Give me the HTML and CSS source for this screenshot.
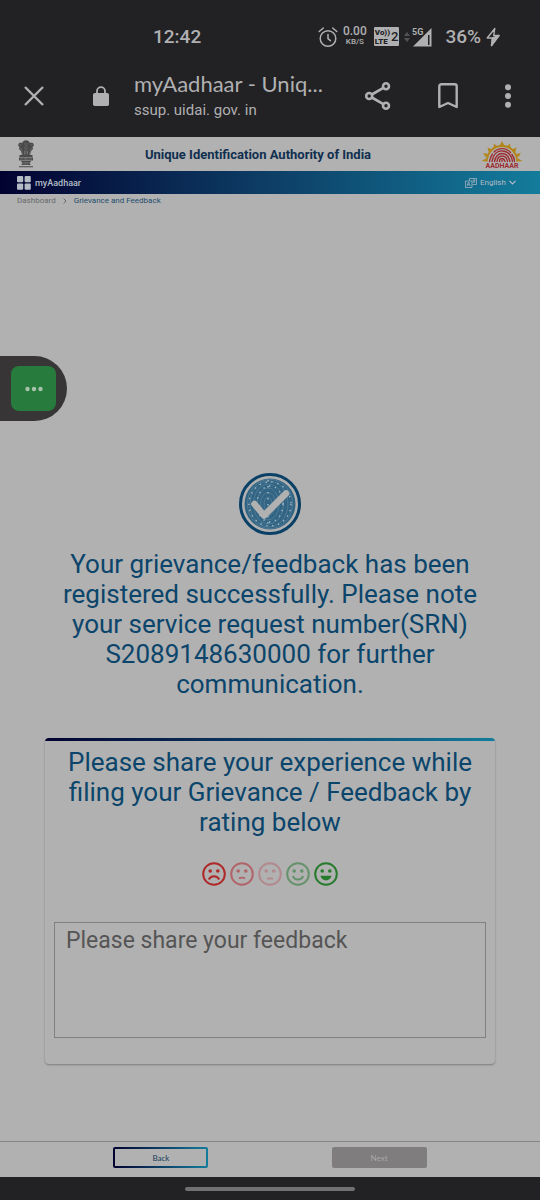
FILE: index.html
```html
<!DOCTYPE html>
<html lang="en">
<head>
  <meta charset="UTF-8">
  <meta name="viewport" content="width=device-width, initial-scale=1.0">
  <title>myAadhaar - Unique Identification Authority of India</title>
  <link rel="stylesheet" href="styles.css">
</head>
<body>
  <!-- Phone status bar -->
  <div class="status-bar">
    <span class="clock">12:42</span>
    <div class="status-icons">
      <svg class="icon-alarm" viewBox="0 0 20 22" fill="none" stroke="currentColor" stroke-width="1.5" stroke-linecap="round">
        <circle cx="10" cy="12.5" r="7.8"/>
        <path d="M10 8.5v4.2l2.4 2M1.2 5.5L5.3 2M18.8 5.5L14.7 2"/>
      </svg>
      <span class="net-speed"><b>0.00</b><small>KB/S</small></span>
      <span class="volte"><span class="volte-label"><span>Vo))</span><span>LTE</span></span><span class="volte-sim">2</span></span>
      <svg class="icon-signal" viewBox="0 0 28 20" fill="currentColor">
        <path d="M0 9l3-4 3 4zM0 11h6l-3 4z" opacity=".35"/>
        <path d="M9 19.5L27.5 1v18.5zM24 8v10h1.5V8z" fill-rule="evenodd"/>
        <text x="8" y="8" class="signal-text">5G</text>
      </svg>
      <span class="battery">36%</span>
      <svg class="icon-bolt" viewBox="0 0 14 20" fill="none" stroke="currentColor" stroke-width="1.4" stroke-linejoin="round">
        <path d="M8.8 1.5L1.2 11h5.2L5.5 18.5 13 8.5H7.7z"/>
        <path d="M6.4 11L13 8.5 5.5 18.5z" fill="currentColor"/>
      </svg>
    </div>
  </div>

  <!-- Browser bar -->
  <div class="browser-bar">
    <button class="icon-btn close-btn" aria-label="Close">
      <svg width="20" height="20" viewBox="0 0 20 20" fill="none" stroke="currentColor" stroke-width="2.4"><path d="M1 1l18 18M19 1L1 19"/></svg>
    </button>
    <svg class="icon-lock" viewBox="0 0 16 20">
      <path d="M4 9V5.2a4 4 0 0 1 8 0V9" fill="none" stroke="currentColor" stroke-width="1.8"/>
      <rect x="0" y="7" width="16" height="13" rx="1.8" fill="currentColor"/>
    </svg>
    <div class="page-info">
      <div class="page-title">myAadhaar - Uniq...</div>
      <div class="page-url">ssup. uidai. gov. in</div>
    </div>
    <div class="browser-actions">
      <button class="icon-btn" aria-label="Share">
        <svg width="26" height="28" viewBox="0 0 26 28" fill="none" stroke="currentColor" stroke-width="2.6">
          <circle cx="21" cy="4.3" r="3"/><circle cx="4.2" cy="14" r="3"/><circle cx="21" cy="23.7" r="3"/>
          <path d="M6.8 12.5l11.6-6.7M6.8 15.5l11.6 6.7"/>
        </svg>
      </button>
      <button class="icon-btn" aria-label="Bookmark">
        <svg width="20" height="26" viewBox="0 0 20 26" fill="none" stroke="currentColor" stroke-width="2.4" stroke-linejoin="round"><path d="M1.3 3.2a2 2 0 0 1 2-2h13.4a2 2 0 0 1 2 2V24L10 20l-8.7 4z"/></svg>
      </button>
      <button class="icon-btn" aria-label="More options">
        <svg width="6" height="24" viewBox="0 0 6 24" fill="currentColor"><circle cx="3" cy="3.2" r="3"/><circle cx="3" cy="12" r="3"/><circle cx="3" cy="20.8" r="3"/></svg>
      </button>
    </div>
  </div>

  <!-- Site header -->
  <header class="header">
    <svg class="emblem" viewBox="0 0 34 56">
      <g fill="#4a4a4a">
        <path d="M11 3q6-5 12 0l2 5-1 7-3 4h-8l-3-4-1-7z"/>
        <path d="M10 5L3 6 1 11l3 3-1 4 4 4 2 8h5l-1-14zM24 5l7 1 2 5-3 3 1 4-4 4-2 8h-5l1-14z"/>
        <path d="M12 18h10l1 12H11zM4 30h26v4H4zM3 35h28v6H3zM7 42h20l-3 5 3 3H7l3-3z"/>
        <path d="M3 52.5h28v2H3z"/>
      </g>
      <g fill="none" stroke="#868686" stroke-width="1.1">
        <path d="M13 8h3M18 8h3M15 12h4M4 10h4M26 10h4M13 15l4 3 4-3M6 16l3 5M28 16l-3 5M14 21v8M17 20v9M20 21v8M9 23l1 6M25 23l-1 6"/>
        <circle cx="17" cy="38" r="2.4"/>
        <path d="M5 38h7M22 38h7M11 45h12M12 48h10"/>
      </g>
    </svg>
    <h1>Unique Identification Authority of India</h1>
    <svg class="aadhaar-logo" viewBox="0 0 84 54">
      <g fill="#b28519">
        <path d="M1 40l9-5 2 6zM4 24l10 2-4 7zM13 13l9 4-6 7zM26 5l7 7-8 4zM42 0l5 10H37zM58 5l1 11-8-4zM71 13l-3 11-6-7zM80 24l-6 9-4-7zM83 40l-11 1 2-6z"/>
        <path d="M10 41C11 20 24 8 42 8s31 12 32 33h-3C69 23 58 12 42 12S15 23 13 41z"/>
      </g>
      <g fill="none" stroke="#9c2a2e" stroke-width="2.7" stroke-linecap="round">
        <path d="M17 41c1-6 3-11 6-15M26 22c9-9 25-9 33 1M62 27c3 4 5 9 5 14M22 41c3-16 12-22 21-21 12 1 18 9 20 21M27 41c2-9 7-16 15-16 9 0 14 7 16 16M32 41c1-7 4-11 10-11s10 5 11 11M37 41c0-4 2-6 5-6s5 3 6 6M42 39v2"/>
      </g>
      <text x="42" y="53" class="logo-text">AADHAAR</text>
    </svg>
  </header>

  <nav class="navbar">
    <a href="#" class="brand">
      <svg width="14" height="14" viewBox="0 0 14 14" fill="currentColor"><rect width="6.2" height="6.2" rx="1"/><rect x="7.6" width="6.2" height="6.2" rx="1"/><rect y="7.6" width="6.2" height="6.2" rx="1"/><rect x="7.6" y="7.6" width="6.2" height="6.2" rx="1"/></svg>
      myAadhaar
    </a>
    <label class="language">
      <svg width="12" height="10" viewBox="0 0 12 10" fill="none" stroke="currentColor" stroke-width=".7">
        <path d="M4.5 2.5V.5h7v6h-4M.5 3h6.5v6.5H.5zM2 8l1.6-4L5.3 8M2.6 6.7h2M7.5 2.2h3M9 1.4v.8M10 2.3L8 4.8M8.1 3l2 1.8"/>
      </svg>
      <select aria-label="Language">
        <option>English</option>
        <option>Hindi</option>
      </select>
      <svg class="chevron" width="7" height="5" viewBox="0 0 7 5" fill="none" stroke="currentColor" stroke-width="1.2"><path d="M.5.8l3 3 3-3"/></svg>
    </label>
  </nav>

  <div class="breadcrumb">
    <a href="#">Dashboard</a>
    <svg width="4" height="6" viewBox="0 0 4 6" fill="none" stroke="currentColor"><path d="M.6.6L3 3 .6 5.4"/></svg>
    <a href="#" class="current">Grievance and Feedback</a>
  </div>

  <!-- Confirmation and rating -->
  <main class="content">
    <svg class="success-icon" viewBox="0 0 62 62" fill="none">
      <circle cx="31" cy="31" r="29.5" stroke="#0b4167" stroke-width="3"/>
      <circle cx="31" cy="31" r="25.5" fill="#326484"/>
      <g stroke="#6489a0" stroke-width=".6">
        <ellipse cx="29" cy="31" rx="4" ry="7"/><ellipse cx="29" cy="31" rx="7.5" ry="11.5"/><ellipse cx="29" cy="31" rx="11" ry="16"/><ellipse cx="29.5" cy="31" rx="15" ry="20"/><ellipse cx="30" cy="31" rx="19" ry="23"/><ellipse cx="31" cy="31" rx="22.5" ry="24.7"/>
      </g>
      <g stroke="#a4bac5" stroke-width="1.4" stroke-dasharray="1.4 4.6">
        <ellipse cx="31" cy="31" rx="21" ry="22"/><ellipse cx="31" cy="31" rx="13" ry="18"/><path d="M29 7v48"/>
      </g>
      <path d="M15.5 31l9.5 11.5L47 20.5" stroke="#b1b1b1" stroke-width="6.6" stroke-linecap="round" stroke-linejoin="round"/>
    </svg>

    <p class="message">Your grievance/feedback has been registered successfully. Please note your service request number(SRN) S2089148630000 for further communication.</p>

    <form class="feedback-card">
      <h2 id="ratingTitle">Please share your experience while filing your Grievance / Feedback by rating below</h2>
      <div class="rating" role="radiogroup" aria-labelledby="ratingTitle">
        <label class="face very-sad">
          <input type="radio" name="rating" value="1" aria-label="Very bad">
          <svg viewBox="0 0 24 24"><circle class="ring" cx="12" cy="12" r="10.8"/><circle cx="8.2" cy="9" r="1.8"/><circle cx="15.8" cy="9" r="1.8"/><path class="mouth" d="M6.8 17.5c2-4.4 8.4-4.4 10.4 0"/></svg>
        </label>
        <label class="face sad">
          <input type="radio" name="rating" value="2" aria-label="Bad">
          <svg viewBox="0 0 24 24"><circle class="ring" cx="12" cy="12" r="10.8"/><circle cx="8.2" cy="9" r="1.8"/><circle cx="15.8" cy="9" r="1.8"/><path class="mouth" d="M9 16.5c1.5-1 4.5-1 6 0"/></svg>
        </label>
        <label class="face neutral">
          <input type="radio" name="rating" value="3" aria-label="Average">
          <svg viewBox="0 0 24 24"><circle class="ring" cx="12" cy="12" r="10.8"/><circle cx="8.2" cy="9" r="1.8"/><circle cx="15.8" cy="9" r="1.8"/><path class="mouth" d="M9 16.5h6"/></svg>
        </label>
        <label class="face happy">
          <input type="radio" name="rating" value="4" aria-label="Good">
          <svg viewBox="0 0 24 24"><circle class="ring" cx="12" cy="12" r="10.8"/><circle cx="8.2" cy="9" r="1.8"/><circle cx="15.8" cy="9" r="1.8"/><path class="mouth" d="M6.8 14.2c2 4.4 8.4 4.4 10.4 0"/></svg>
        </label>
        <label class="face very-happy">
          <input type="radio" name="rating" value="5" aria-label="Very good">
          <svg viewBox="0 0 24 24"><circle class="ring" cx="12" cy="12" r="10.8"/><circle cx="8.2" cy="9" r="1.8"/><circle cx="15.8" cy="9" r="1.8"/><path d="M6.4 13.8h11.2c-1.6 6.2-9.6 6.2-11.2 0z"/></svg>
        </label>
      </div>
      <textarea class="feedback-text" aria-label="Feedback" placeholder="Please share your feedback"></textarea>
    </form>
  </main>

  <footer class="footer">
    <button class="btn back-btn">Back</button>
    <button class="btn next-btn" disabled>Next</button>
  </footer>

  <div class="gesture-bar"><span class="gesture-handle"></span></div>

  <!-- Floating chat button -->
  <div class="chat-tab">
    <button class="chat-btn" aria-label="Open chat">
      <svg width="18" height="6" viewBox="0 0 18 6" fill="currentColor"><circle cx="2.5" cy="3" r="2.2"/><circle cx="9" cy="3" r="2.2"/><circle cx="15.5" cy="3" r="2.2"/></svg>
    </button>
  </div>
</body>
</html>
```
FILE: styles.css
```css
:root {
  --page: #b1b1b1;
  --bar: #222224;
  --bar-text: #b0b0b2;
  --blue: #0b456b;
  --gradient: linear-gradient(90deg, #020230, #0d3e66 50%, #137c9c);
}

* {
  margin: 0;
  padding: 0;
  box-sizing: border-box;
}

body {
  display: flex;
  flex-direction: column;
  min-height: 100vh;
  background: var(--page);
  color: var(--blue);
  font-family: Roboto, sans-serif;
}

svg {
  display: block;
  flex-shrink: 0;
}

button {
  border: none;
  font-family: inherit;
  cursor: pointer;
}

a {
  color: inherit;
  text-decoration: none;
}

/* Status bar */
.status-bar {
  display: flex;
  align-items: center;
  justify-content: space-between;
  height: 57px;
  padding: 16px 40px 0 153px;
  background: var(--bar);
  color: var(--bar-text);
}

.clock,
.battery {
  font-size: 19px;
  font-weight: 500;
}

.status-icons {
  display: flex;
  align-items: center;
  gap: 5px;
}

.icon-alarm {
  width: 20px;
  height: 22px;
}

.net-speed {
  display: flex;
  flex-direction: column;
  align-items: center;
  font-size: 12px;
  line-height: 11px;
}

.net-speed b {
  font-weight: 500;
}

.net-speed small {
  font-size: 8px;
  font-weight: 500;
  line-height: 10px;
}

.volte {
  display: flex;
  align-items: center;
  gap: 1px;
  height: 19px;
  margin-left: 2px;
  padding: 0 1px;
  border-radius: 1px;
  background: var(--bar-text);
  color: var(--bar);
  font-weight: 900;
}

.volte-label {
  display: flex;
  flex-direction: column;
  font-size: 8px;
  line-height: 9px;
}

.volte-sim {
  font-size: 13px;
  font-weight: 500;
}

.icon-signal {
  width: 28px;
  height: 20px;
}

.signal-text {
  font-size: 9px;
  font-weight: 700;
}

.battery {
  margin-left: 8px;
}

.icon-bolt {
  width: 14px;
  height: 20px;
}

/* Browser bar */
.browser-bar {
  display: flex;
  align-items: center;
  height: 80px;
  padding: 0 29px 2px 24px;
  background: var(--bar);
  color: var(--bar-text);
}

.icon-btn {
  background: none;
  color: inherit;
}

.icon-lock {
  width: 16px;
  height: 20px;
  margin: 0 25px 0 49px;
}

.page-info {
  flex: 1;
  min-width: 0;
}

.page-title {
  font-family: Lato, sans-serif;
  font-size: 22px;
  line-height: 28px;
  white-space: nowrap;
}

.page-url {
  font-size: 15px;
  line-height: 24px;
}

.browser-actions {
  display: flex;
  align-items: center;
  gap: 47px;
  margin-left: 36px;
}

/* Site header */
.header {
  display: flex;
  align-items: center;
  justify-content: space-between;
  height: 34px;
  padding: 0 17px;
}

.header h1 {
  color: #102f4f;
  font-size: 13px;
  font-weight: 700;
}

.emblem {
  width: 18px;
  height: 28px;
}

.aadhaar-logo {
  width: 42px;
  height: 27px;
}

.logo-text {
  fill: #9c2a2e;
  font-size: 14px;
  font-weight: 700;
  text-anchor: middle;
}

.navbar {
  display: flex;
  align-items: center;
  justify-content: space-between;
  height: 23px;
  padding: 0 24px 0 17px;
  background: var(--gradient);
  color: #b4bcc6;
}

.brand {
  display: flex;
  align-items: center;
  gap: 4px;
  font-size: 9px;
  font-weight: 500;
}

.language {
  display: flex;
  align-items: center;
  gap: 3px;
}

.language select {
  appearance: none;
  border: none;
  background: none;
  color: inherit;
  font-family: inherit;
  font-size: 8px;
}

.breadcrumb {
  display: flex;
  align-items: center;
  gap: 7px;
  padding: 1px 17px;
  color: #68686a;
  font-size: 8px;
  line-height: 11px;
}

.breadcrumb .current {
  color: #1f4e6d;
}

/* Content */
.content {
  display: flex;
  flex: 1;
  flex-direction: column;
  align-items: center;
  padding: 266px 45px 77px;
}

.success-icon {
  width: 62px;
  height: 62px;
}

.message {
  margin-top: 14px;
  font-size: 26px;
  line-height: 30px;
  text-align: center;
}

/* Feedback card */
.feedback-card {
  position: relative;
  width: 100%;
  margin-top: 39px;
  padding: 9px 9px 26px;
  border-radius: 4px;
  box-shadow: 0 1px 2px rgba(0, 0, 0, 0.3);
  overflow: hidden;
}

.feedback-card::before {
  content: "";
  position: absolute;
  top: 0;
  left: 0;
  right: 0;
  height: 3px;
  background: var(--gradient);
}

.feedback-card h2 {
  font-size: 26px;
  font-weight: 400;
  line-height: 30px;
  text-align: center;
}

.rating {
  display: flex;
  justify-content: center;
  gap: 4px;
  margin: 25px 0 36px;
}

.face {
  cursor: pointer;
}

.face input {
  position: absolute;
  opacity: 0;
}

.face svg {
  width: 24px;
  height: 24px;
  fill: currentColor;
}

.face .ring,
.face .mouth {
  fill: none;
  stroke: currentColor;
  stroke-width: 2;
}

.very-sad { color: #ae2929; }
.sad { color: #b16469; }
.neutral { color: #b1898e; }
.happy { color: #66916b; }
.very-happy { color: #267b2d; }

.feedback-text {
  display: block;
  width: 100%;
  height: 116px;
  padding: 4px 11px;
  border: 1px solid #808080;
  background: none;
  color: #444;
  font-family: inherit;
  font-size: 23px;
  line-height: 28px;
  resize: none;
}

.feedback-text::placeholder {
  color: #555;
}

/* Footer */
.footer {
  display: flex;
  justify-content: space-between;
  padding: 5px 21% 9px;
  border-top: 1px solid #838486;
}

.btn {
  width: 95px;
  height: 21px;
  border-radius: 2px;
  font-family: Lato, sans-serif;
  font-size: 8px;
}

.back-btn {
  border: 2px solid transparent;
  background: linear-gradient(var(--page), var(--page)) padding-box, var(--gradient) border-box;
  color: #173d5b;
}

.next-btn {
  background: #807d7e;
  color: #a8a8a8;
}

.gesture-bar {
  display: flex;
  align-items: center;
  justify-content: center;
  height: 23px;
  background: var(--bar);
}

.gesture-handle {
  width: 170px;
  height: 4px;
  border-radius: 2px;
  background: #707072;
}

/* Chat tab */
.chat-tab {
  position: absolute;
  top: 356px;
  left: 0;
  padding: 10px 11px;
  border-radius: 0 33px 33px 0;
  background: #373536;
}

.chat-btn {
  display: flex;
  align-items: center;
  justify-content: center;
  width: 45px;
  height: 45px;
  border-radius: 8px;
  background: #277b3d;
  color: #a9c2ac;
}
```
